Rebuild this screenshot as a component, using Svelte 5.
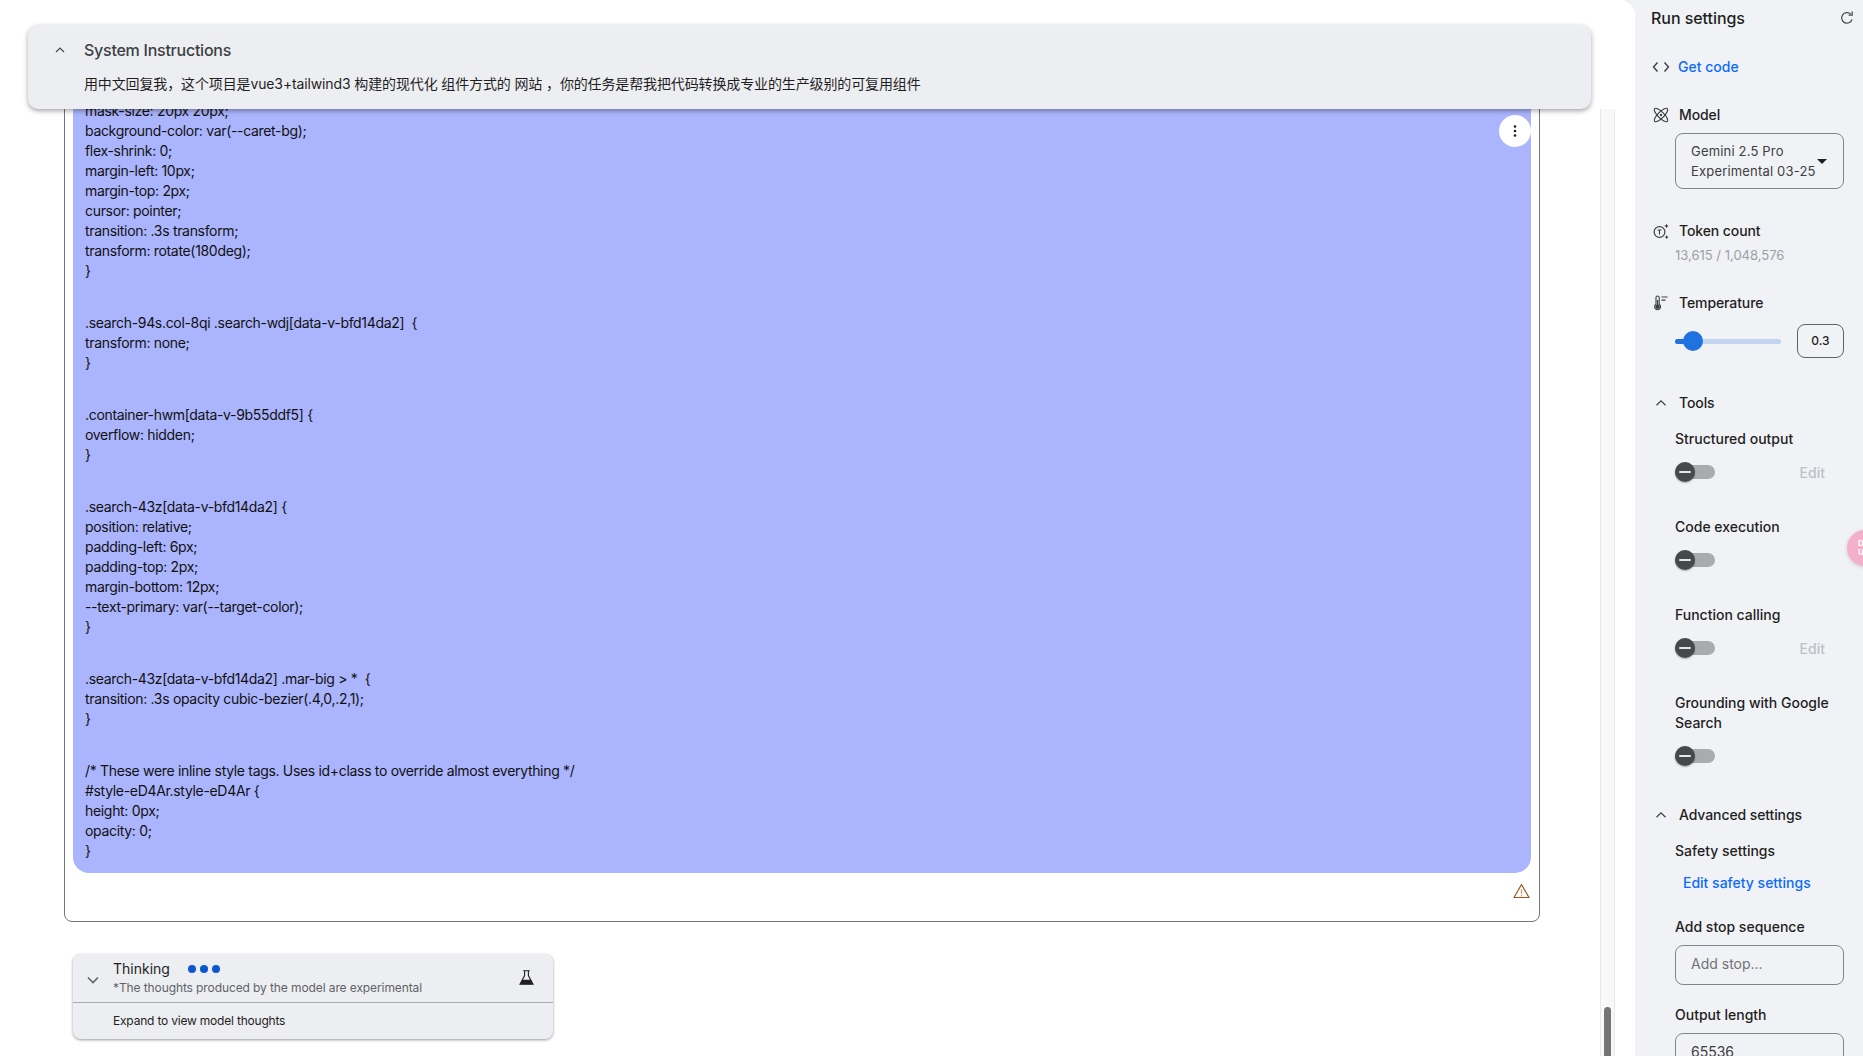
<script>
  const blocks = [
    ['mask-size: 20px 20px;','background-color: var(--caret-bg);','flex-shrink: 0;','margin-left: 10px;','margin-top: 2px;','cursor: pointer;','transition: .3s transform;','transform: rotate(180deg);','}'],
    ['.search-94s.col-8qi .search-wdj[data-v-bfd14da2]  {','transform: none;','}'],
    ['.container-hwm[data-v-9b55ddf5] {','overflow: hidden;','}'],
    ['.search-43z[data-v-bfd14da2] {','position: relative;','padding-left: 6px;','padding-top: 2px;','margin-bottom: 12px;','--text-primary: var(--target-color);','}'],
    ['.search-43z[data-v-bfd14da2] .mar-big > *  {','transition: .3s opacity cubic-bezier(.4,0,.2,1);','}'],
    ['/* These were inline style tags. Uses id+class to override almost everything */','#style-eD4Ar.style-eD4Ar {','height: 0px;','opacity: 0;','}']
  ];
  const tools = [
    { label: 'Structured output', edit: true },
    { label: 'Code execution', edit: false },
    { label: 'Function calling', edit: true },
    { label: 'Grounding with Google Search', edit: false }
  ];
</script>

<div class="page">
  <main class="main">
    <div class="band">
      <section class="sys">
        <div class="sys-head">
          <svg class="sys-chev" width="12" height="12" viewBox="0 0 12 12"><path d="M2 8l4-4 4 4" fill="none" stroke="#444746" stroke-width="1.2"/></svg>
          <span class="sys-title">System Instructions</span>
        </div>
        <p class="sys-text">用中文回复我，这个项目是vue3+tailwind3 构建的现代化 组件方式的 网站 ，你的任务是帮我把代码转换成专业的生产级别的可复用组件</p>
      </section>
    </div>
    <div class="scroll-row">
      <div class="content">
        <div class="message">
          <div class="selected">
            <button class="dots" aria-label="more">
              <svg width="4" height="14" viewBox="0 0 4 14"><circle cx="2" cy="2.5" r="1.3" fill="#1f1f1f"/><circle cx="2" cy="7" r="1.3" fill="#1f1f1f"/><circle cx="2" cy="11.5" r="1.3" fill="#1f1f1f"/></svg>
            </button>
            {#each blocks as block}
              <div class="code-block">
                {#each block as line}<div class="line">{line}</div>{/each}
              </div>
            {/each}
          </div>
          <div class="message-foot">
            <svg width="17" height="16" viewBox="0 0 17 16"><path d="M8.5 1.5L1 14.5h15z" fill="none" stroke="#96591a" stroke-width="1.2" stroke-linejoin="round"/><path d="M8.5 6v5M8.5 12v1.4" stroke="#c9a98a" stroke-width="1.4"/></svg>
          </div>
        </div>
        <section class="thinking">
          <div class="think-head">
            <svg class="think-chev" width="14" height="14" viewBox="0 0 14 14"><path d="M2 4.5l5 5 5-5" fill="none" stroke="#5f6368" stroke-width="1.6"/></svg>
            <div class="think-copy">
              <div class="think-title">Thinking <span class="tdots"><i></i><i></i><i></i></span></div>
              <div class="think-sub">*The thoughts produced by the model are experimental</div>
            </div>
            <svg class="flask" width="15" height="15" viewBox="0 0 15 15"><path d="M4.2 0.8h6.6M5.6 0.8v4.8L1 14.2h13L9.4 5.6V0.8" fill="none" stroke="#1f1f1f" stroke-width="1.1"/><path d="M3.4 9.8h8.2l2.4 4.4H1z" fill="#1f1f1f"/></svg>
          </div>
          <div class="think-foot">Expand to view model thoughts</div>
        </section>
      </div>
      <div class="track"><div class="thumb"></div></div>
    </div>
  </main>

  <aside class="side">
    <div class="side-head">
      <h2>Run settings</h2>
      <svg width="16" height="16" viewBox="0 0 16 16"><path d="M13 9.5A5.3 5.3 0 1 1 11.6 4" fill="none" stroke="#444746" stroke-width="1.2"/><path d="M13.2 1.6v3.6H9.6" fill="none" stroke="#444746" stroke-width="1.2"/></svg>
    </div>

    <div class="row getcode">
      <svg class="ico" width="18" height="12" viewBox="0 0 18 12"><path d="M5.5 1.5L1.5 6l4 4.5M12.5 1.5l4 4.5-4 4.5" fill="none" stroke="#3c4043" stroke-width="1.4"/></svg>
      <a class="link" href="#code">Get code</a>
    </div>

    <div class="row model"><svg class="ico" width="16" height="16" viewBox="0 0 16 16"><g fill="none" stroke="#3c4043" stroke-width="1.2"><ellipse rx="9" ry="3.1" transform="translate(8 8) rotate(45)"/><ellipse rx="9" ry="3.1" transform="translate(8 8) rotate(-45)"/></g><circle cx="8" cy="8" r="1.2" fill="#3c4043"/></svg><span class="label">Model</span></div>
    <div class="select">
      <span>Gemini 2.5 Pro Experimental 03-25</span>
      <i class="caret"></i>
    </div>

    <div class="row token"><svg class="ico" width="17" height="17" viewBox="0 0 17 17"><circle cx="7" cy="9" r="5.4" fill="none" stroke="#3c4043" stroke-width="1.2"/><path d="M5 7h4M7 7v4.4" stroke="#3c4043" stroke-width="1.1" fill="none"/><path d="M14 0.8l.7 1.5 1.5.7-1.5.7-.7 1.5-.7-1.5-1.5-.7 1.5-.7zM14.2 12l.7 1.4 1.4.7-1.4.7-.7 1.4-.7-1.4-1.4-.7 1.4-.7z" fill="#3c4043"/></svg><span class="label">Token count</span></div>
    <div class="muted">13,615 / 1,048,576</div>

    <div class="row temp"><svg class="ico" width="16" height="16" viewBox="0 0 16 16"><path d="M3 2.6a1.6 1.6 0 0 1 3.2 0v6.6a3 3 0 1 1-3.2 0z" fill="none" stroke="#3c4043" stroke-width="1.1"/><circle cx="4.6" cy="11.8" r="2.3" fill="#3c4043"/><path d="M4.6 5v6" stroke="#3c4043" stroke-width="1.3"/><path d="M8.5 2h6M8.5 5.2h4" stroke="#3c4043" stroke-width="1.2"/></svg><span class="label">Temperature</span></div>
    <div class="slider-row">
      <div class="slider"><div class="fill"></div><div class="knob"></div></div>
      <div class="num">0.3</div>
    </div>

    <div class="row tools"><svg class="ico" width="12" height="12" viewBox="0 0 12 12"><path d="M1.5 8.2L6 3.8l4.5 4.4" fill="none" stroke="#3c4043" stroke-width="1.2"/></svg><span class="label">Tools</span></div>
    <div class="tool-list">
      {#each tools as t}
        <div class="tool">
          <div class="tool-label">{t.label}</div>
          <div class="tool-ctl">
            <span class="toggle"><span class="tknob"><i></i></span></span>
            {#if t.edit}<span class="edit">Edit</span>{/if}
          </div>
        </div>
      {/each}
    </div>

    <div class="row adv"><svg class="ico" width="12" height="12" viewBox="0 0 12 12"><path d="M1.5 8.2L6 3.8l4.5 4.4" fill="none" stroke="#3c4043" stroke-width="1.2"/></svg><span class="label">Advanced settings</span></div>
    <div class="field-label safety">Safety settings</div>
    <a class="link safety-link" href="#safety">Edit safety settings</a>
    <div class="field-label stop">Add stop sequence</div>
    <div class="input placeholder">Add stop...</div>
    <div class="field-label output">Output length</div>
    <div class="input value">65536</div>

    <div class="bubble"><span>D<br>U</span></div>
  </aside>
</div>

<style>
  :global(body) { margin: 0; background: #f1f2f5; font-family: Inter, "Noto Sans CJK SC", "Liberation Sans", sans-serif; color: #1f1f1f; }
  .page { display: flex; height: 1056px; width: 1863px; overflow: hidden; position: relative; }
  .main { width: 1635px; flex: none; background: #fff; border-top-right-radius: 16px; display: flex; flex-direction: column; overflow: hidden; }
  .band { height: 109px; flex: none; background: #fff; position: relative; z-index: 2; padding: 25px 44px 0 28px; box-sizing: border-box; }
  .sys { height: 84px; background: #edeef1; border-radius: 10px; box-shadow: 0 2px 5px rgba(0,0,0,.35); box-sizing: border-box; padding: 16px 0 0 26px; }
  .sys-head { display: flex; align-items: center; gap: 18px; height: 18px; }
  .sys-chev { flex: none; }
  .sys-title { font-size: 16px; font-weight: 500; letter-spacing: -.25px; color: #3c4043; }
  .sys-text { margin: 16px 0 0 30px; font-size: 14px; letter-spacing: -.13px; line-height: 18px; color: #1f1f1f; font-family: Inter, "Noto Sans CJK SC", sans-serif; }
  .scroll-row { flex: 1; min-height: 0; display: flex; }
  .content { width: 1600px; flex: none; box-sizing: border-box; padding-left: 64px; padding-right: 60px; }
  .message { margin-top: -24px; height: 837px; border: 1px solid #747775; border-radius: 0 0 8px 8px; box-sizing: border-box; padding: 0 8px; }
  .selected { position: relative; background: #abb5fd; border-radius: 0 0 16px 16px; padding: 15px 10px 0 12px; height: 787px; box-sizing: border-box; }
  .code-block { margin-bottom: 32px; }
  .code-block:last-of-type { margin-bottom: 0; }
  .line { font-size: 14px; letter-spacing: -.32px; line-height: 20px; height: 20px; color: #111; white-space: pre; }
  .dots { position: absolute; top: 29px; right: 0; width: 32px; height: 32px; border: 0; border-radius: 50%; background: #fff; padding: 0; display: flex; align-items: center; justify-content: center; }
  .message-foot { display: flex; justify-content: flex-end; padding: 10px 0 0; }
  .message-foot svg { margin-right: 1px; }
  .thinking { width: 480px; height: 85px; margin: 32px 0 0 9px; background: #edeef1; border-radius: 8px; box-shadow: 0 1px 3px rgba(0,0,0,.4); box-sizing: border-box; }
  .think-head { height: 49px; display: flex; align-items: center; border-bottom: 1px solid #a8abae; box-sizing: border-box; padding-left: 13px; position: relative; }
  .think-chev { flex: none; margin-top: 4px; margin-right: 13px; }
  .think-copy { flex: 1; margin-top: -2px; }
  .think-title { font-size: 14px; line-height: 20px; font-weight: 400; display: flex; align-items: center; height: 20px; margin-top: 1px; }
  .tdots { display: inline-flex; gap: 4px; margin-left: 18px; }
  .tdots i { width: 8px; height: 8px; border-radius: 50%; background: #0b57d0; display: block; }
  .think-sub { font-size: 12px; letter-spacing: -.1px; line-height: 18px; color: #5f6368; margin-top: 0; }
  .flask { margin-right: 19px; margin-top: -2px; flex: none; }
  .think-foot { font-size: 12px; letter-spacing: -.2px; line-height: 36px; padding-left: 40px; color: #1f1f1f; }
  .track { width: 15px; flex: none; background: #f8f8f8; border-left: 1px solid #e8e8e8; border-right: 1px solid #e8e8e8; box-sizing: border-box; display: flex; flex-direction: column; justify-content: flex-end; align-items: center; }
  .thumb { width: 7px; height: 49px; background: #757575; border-radius: 4px 4px 0 0; }

  .side { flex: 1; box-sizing: border-box; padding: 0 19px 0 17px; position: relative; font-size: 14px; }
  .side-head { display: flex; justify-content: space-between; align-items: center; height: 18px; margin-top: 9px; margin-right: -11px; }
  .side-head h2 { margin: 0 0 0 -1px; font-size: 16px; letter-spacing: -.05px; line-height: 18px; font-weight: 500; color: #1f1f1f; }
  .row { display: flex; align-items: center; height: 20px; }
  .ico { width: 18px; flex: none; margin-right: 9px; }
  .label { font-weight: 500; letter-spacing: -.1px; color: #1f1f1f; line-height: 20px; }
  .link { color: #0b6bff; font-weight: 500; text-decoration: none; line-height: 20px; }
  .getcode { margin-top: 30px; }
  .getcode .ico { margin-right: 8px; }
  .model { margin-top: 28px; }
  .select { margin: 8px 0 0 23px; height: 56px; border: 1px solid #80868b; border-radius: 8px; box-sizing: border-box; padding: 7px 15px; line-height: 20px; font-size: 13px; letter-spacing: .18px; color: #3c4043; position: relative; }
  .select span { display: block; width: 132px; }
  .caret { position: absolute; right: 16px; top: 25px; width: 0; height: 0; border-left: 5px solid transparent; border-right: 5px solid transparent; border-top: 5px solid #1f1f1f; }
  .token { margin-top: 32px; }
  .muted { margin: 4px 0 0 23px; line-height: 20px; color: #9aa0a6; font-size: 13px; }
  .temp { margin-top: 28px; }
  .slider-row { display: flex; align-items: center; margin: 11px 0 0 23px; height: 34px; gap: 16px; }
  .slider { width: 106px; height: 5px; border-radius: 3px; background: #c2d4f2; position: relative; }
  .fill { width: 18px; height: 5px; background: #1f72e0; border-radius: 3px; }
  .knob { position: absolute; left: 8px; top: -8px; width: 20px; height: 20px; border-radius: 50%; background: #1f72e0; }
  .num { width: 47px; height: 34px; box-sizing: border-box; border: 1px solid #5f6368; border-radius: 8px; text-align: center; line-height: 32px; font-size: 12px; color: #1f1f1f; font-weight: 500; }
  .tools { margin-top: 35px; }
  .tool-list { margin: 6px 0 0 23px; }
  .tool-label { font-weight: 500; line-height: 20px; color: #1f1f1f; }
  .tool { padding-top: 10px; padding-bottom: 25px; }
  .tool-ctl { display: flex; justify-content: space-between; align-items: center; height: 20px; margin-top: 13px; padding-right: 19px; }
  .toggle { width: 40px; height: 14px; background: #a9abaf; border-radius: 7px; position: relative; display: block; }
  .tknob { position: absolute; left: 0; top: -3px; width: 20px; height: 20px; border-radius: 50%; background: #46484c; box-shadow: 0 1px 2px rgba(0,0,0,.3); display: flex; align-items: center; justify-content: center; }
  .tknob i { width: 12px; height: 2px; background: #e6e6e6; border-radius: 1px; display: block; }
  .edit { color: #bdc1c6; font-weight: 500; font-size: 14px; }
  .adv { margin-top: 14px; }
  .field-label { margin-left: 23px; font-weight: 500; line-height: 20px; color: #1f1f1f; }
  .safety { margin-top: 16px; }
  .safety-link { display: block; margin: 12px 0 0 31px; }
  .stop { margin-top: 24px; }
  .input { margin: 8px 0 0 23px; height: 40px; border: 1px solid #80868b; border-radius: 8px; box-sizing: border-box; padding-left: 15px; line-height: 36px; }
  .placeholder { color: #6f7377; }
  .value { color: #3c4043; height: 60px; }
  .output { margin-top: 20px; }
  .bubble { position: absolute; left: 212px; top: 530px; width: 36px; height: 36px; border-radius: 50%; background: #f4afcb; box-shadow: 0 1px 4px rgba(0,0,0,.15); color: #fff; font-size: 8px; font-weight: 700; line-height: 9px; }
  .bubble span { position: absolute; left: 11px; top: 9px; }
</style>
